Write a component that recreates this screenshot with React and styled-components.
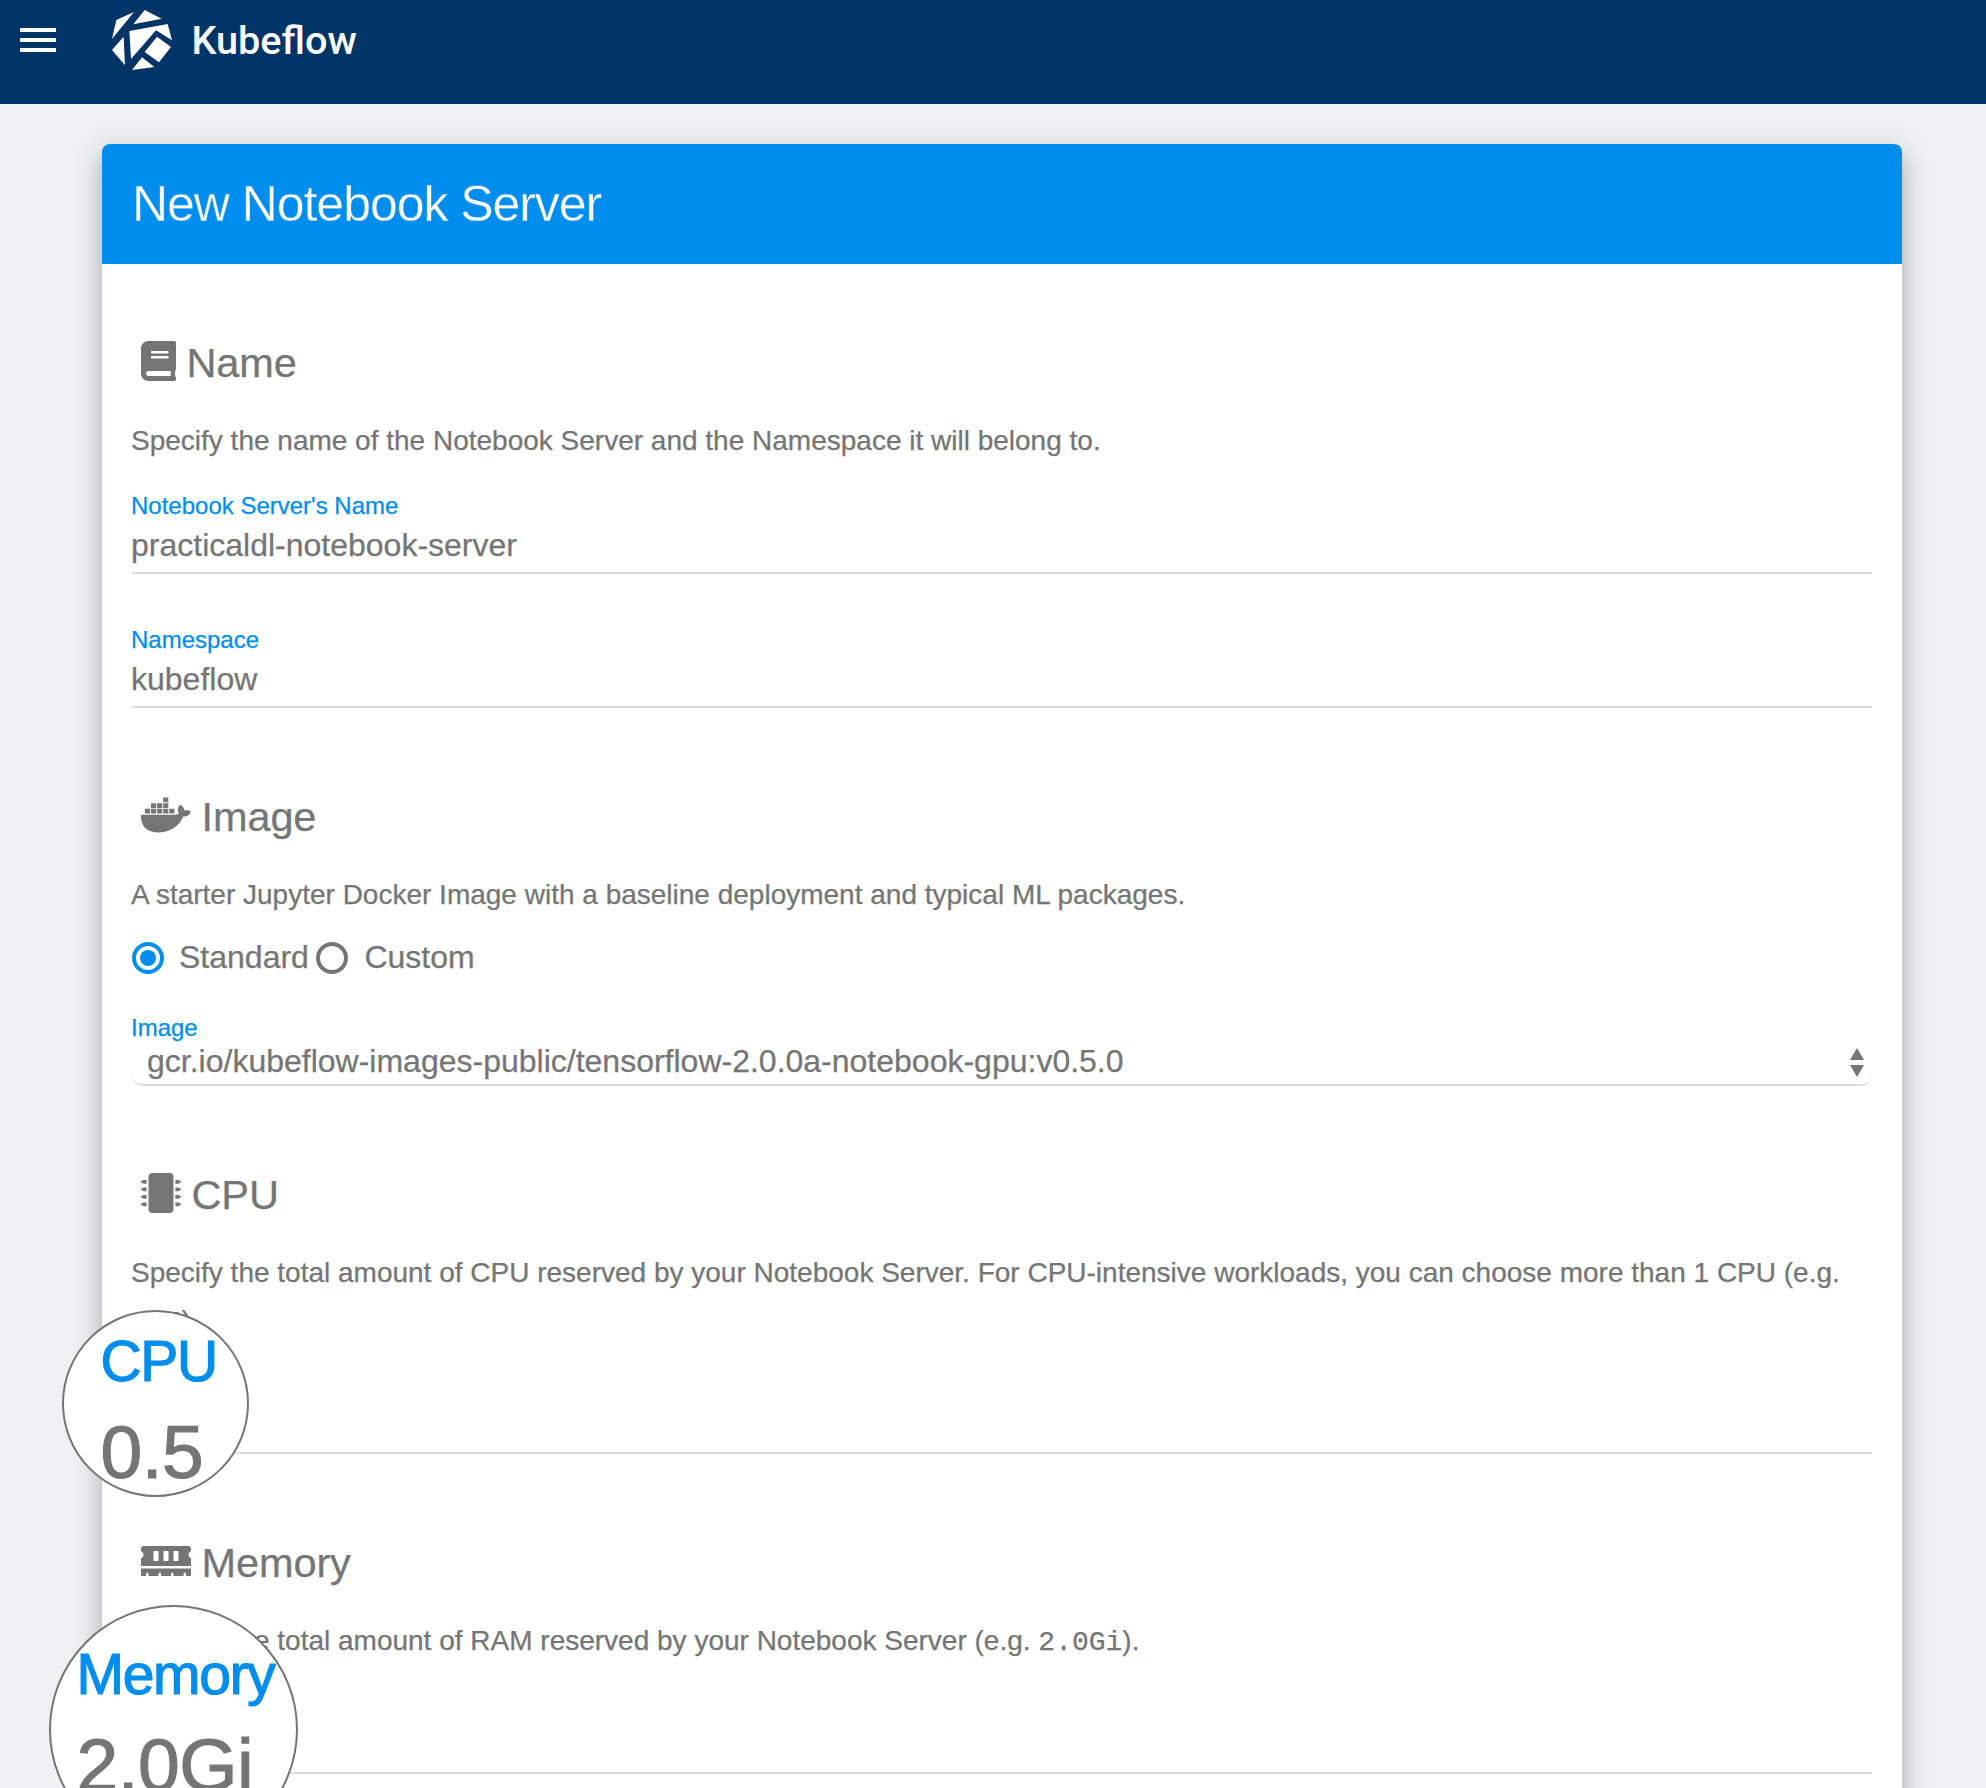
import React from "react";
import styled, { createGlobalStyle } from "styled-components";
import { FaBook, FaDocker, FaMicrochip, FaMemory } from "react-icons/fa";

const GlobalStyle = createGlobalStyle`
  * { box-sizing: border-box; }
  body {
    margin: 0;
    background: #eff0f2;
    font-family: "Liberation Sans", Arial, sans-serif;
    color: #757575;
    -webkit-text-stroke: 0.25px currentColor;
  }
`;

const Page = styled.div`
  position: relative;
  height: 1788px;
  overflow: hidden;
`;

const TopBar = styled.header`
  display: flex;
  align-items: flex-start;
  height: 104px;
  padding: 10px 20px;
  background: #003366;
  color: #fff;
`;

const MenuButton = styled.div`
  display: flex;
  flex-direction: column;
  gap: 6px;
  width: 36px;
  margin: 18px 56px 0 0;
`;

const MenuBar = styled.span`
  height: 4px;
  background: #fff;
`;

const Logo = styled.svg`
  width: 60px;
  height: 60px;
  fill: #fff;
`;

const Brand = styled.span`
  margin-left: 19.5px;
  font: 500 39.6px/62px Roboto, sans-serif;
  -webkit-text-stroke: 0;
`;

const Card = styled.main`
  width: 1800px;
  height: 1720px;
  margin: 40px 0 0 102px;
  border-radius: 8px;
  background: #fff;
  box-shadow: 0 16px 20px 2px rgba(0, 0, 0, 0.14),
    0 6px 28px 4px rgba(0, 0, 0, 0.12), 0 10px 10px -6px rgba(0, 0, 0, 0.2);
`;

const CardHeader = styled.div`
  height: 120px;
  padding: 0 30px;
  border-radius: 8px 8px 0 0;
  background: #008eee;
`;

const Title = styled.h1`
  margin: 0;
  font-size: 50px;
  font-weight: 400;
  line-height: 120px;
  letter-spacing: -1.05px;
  color: #fff;
  -webkit-text-stroke: 0.4px #008eee;
`;

const Form = styled.form`
  display: flex;
  flex-direction: column;
  gap: 87px;
  padding: 77px 30px 0;
`;

const Section = styled.section`
  display: flex;
  flex-direction: column;
`;

const Heading = styled.h2`
  display: flex;
  gap: 10.5px;
  height: 40px;
  margin: 0 0 35px;
  padding-left: 9px;
  font-size: 41.5px;
  font-weight: 400;
  line-height: 44px;
  letter-spacing: -0.1px;

  svg {
    height: 40px;
    width: ${(p) => p.$iconWidth}px;
  }
`;

const Description = styled.p`
  margin: 1px 0 -1px -1px;
  font-size: 28px;
  line-height: 48px;
`;

const Code = styled.code`
  font-family: "Liberation Mono", monospace;
  font-size: 28px;
  line-height: 1;
`;

const Field = styled.div`
  margin-top: ${(p) => p.$top || 27}px;
`;

const Label = styled.div`
  height: 28px;
  margin-left: -1px;
  font-size: 24px;
  line-height: 30px;
  color: #008eee;
`;

const Value = styled.div`
  height: 55px;
  border-bottom: 2px solid #e0e0e0;
  font-size: 32px;
  line-height: 53px;
  text-indent: -1px;
`;

const Select = styled.div`
  display: flex;
  justify-content: space-between;
  height: 45px;
  padding: 0 8px 0 15px;
  border-bottom: 2px solid #e0e0e0;
  border-radius: 10px;
  font-size: 32px;
  line-height: 40px;
`;

const Arrows = styled.svg`
  width: 14px;
  height: 29px;
  margin-top: 7px;
  fill: #757575;
`;

const RadioGroup = styled.div`
  display: flex;
  gap: 7px;
  height: 32px;
  margin-top: 24px;
`;

const RadioOption = styled.div`
  display: flex;
  gap: ${(p) => p.$gap}px;
  font-size: 32px;
  line-height: 30px;
`;

const RadioCircle = styled.span`
  display: grid;
  place-items: center;
  width: 32px;
  height: 32px;
  border: 4px solid ${(p) => (p.$checked ? "#008eee" : "#757575")};
  border-radius: 50%;

  &::after {
    content: "";
    width: 16px;
    height: 16px;
    border-radius: 50%;
    background: ${(p) => (p.$checked ? "#008eee" : "transparent")};
  }
`;

const Magnifier = styled.div`
  position: absolute;
  left: ${(p) => p.$x}px;
  top: ${(p) => p.$y}px;
  width: ${(p) => p.$size}px;
  height: ${(p) => p.$size}px;
  padding: ${(p) => p.$pad};
  border: 2px solid #757575;
  border-radius: 50%;
  background: #fff;
  white-space: nowrap;
  -webkit-text-stroke: 1.2px #757575;
`;

const MagnifiedLabel = styled.div`
  font-size: 57px;
  line-height: 60px;
  letter-spacing: -1.3px;
  color: #008eee;
  -webkit-text-stroke: 1.2px #008eee;
`;

const MagnifiedValue = styled.div`
  margin-top: ${(p) => p.$top}px;
  font-size: 75px;
  line-height: 80px;
  letter-spacing: -0.5px;
`;

function TextField({ label, value, top }) {
  return (
    <Field $top={top}>
      <Label>{label}</Label>
      <Value>{value}</Value>
    </Field>
  );
}

export default function App() {
  return (
    <Page>
      <GlobalStyle />
      <TopBar>
        <MenuButton>
          <MenuBar />
          <MenuBar />
          <MenuBar />
        </MenuButton>
        <Logo viewBox="336 30 180 180">
          <polygon points="402,36 349,60 336,117" />
          <polygon points="434,30 485,56 400,73" />
          <polygon points="371,110 375,196 336,150" />
          <polygon points="388,93 503,72 516,121 468,91 393,177" />
          <polygon points="471,110 513,141 477,187 434,156" />
          <polygon points="426,172 463,201 396,210" />
        </Logo>
        <Brand>Kubeflow</Brand>
      </TopBar>
      <Card>
        <CardHeader>
          <Title>New Notebook Server</Title>
        </CardHeader>
        <Form>
          <Section>
            <Heading $iconWidth={35}>
              <FaBook />
              Name
            </Heading>
            <Description>
              Specify the name of the Notebook Server and the Namespace it will belong to.
            </Description>
            <TextField label="Notebook Server's Name" value="practicaldl-notebook-server" />
            <TextField label="Namespace" value="kubeflow" top={51} />
          </Section>
          <Section>
            <Heading $iconWidth={50}>
              <FaDocker />
              Image
            </Heading>
            <Description>
              A starter Jupyter Docker Image with a baseline deployment and typical ML packages.
            </Description>
            <RadioGroup>
              <RadioOption $gap={15}>
                <RadioCircle $checked />
                Standard
              </RadioOption>
              <RadioOption $gap={16.5}>
                <RadioCircle />
                Custom
              </RadioOption>
            </RadioGroup>
            <Field $top={39}>
              <Label>Image</Label>
              <Select>
                gcr.io/kubeflow-images-public/tensorflow-2.0.0a-notebook-gpu:v0.5.0
                <Arrows viewBox="0 0 14 29">
                  <polygon points="7,0 14,12 0,12" />
                  <polygon points="0,17 14,17 7,29" />
                </Arrows>
              </Select>
            </Field>
          </Section>
          <Section>
            <Heading $iconWidth={40}>
              <FaMicrochip />
              CPU
            </Heading>
            <Description>
              Specify the total amount of CPU reserved by your Notebook Server. For CPU-intensive
              workloads, you can choose more than 1 CPU (e.g. <Code>1.5</Code>).
            </Description>
            <TextField />
          </Section>
          <Section>
            <Heading $iconWidth={50}>
              <FaMemory />
              Memory
            </Heading>
            <Description>
              Specify the total amount of RAM reserved by your Notebook Server (e.g.{" "}
              <Code>2.0Gi</Code>).
            </Description>
            <TextField />
          </Section>
        </Form>
      </Card>
      <Magnifier $x={62} $y={1310} $size={187} $pad="19px 0 0 36.5px">
        <MagnifiedLabel>CPU</MagnifiedLabel>
        <MagnifiedValue $top={21}>0.5</MagnifiedValue>
      </Magnifier>
      <Magnifier $x={49} $y={1605} $size={249} $pad="37px 0 0 25.5px">
        <MagnifiedLabel>Memory</MagnifiedLabel>
        <MagnifiedValue $top={21}>2.0Gi</MagnifiedValue>
      </Magnifier>
    </Page>
  );
}
